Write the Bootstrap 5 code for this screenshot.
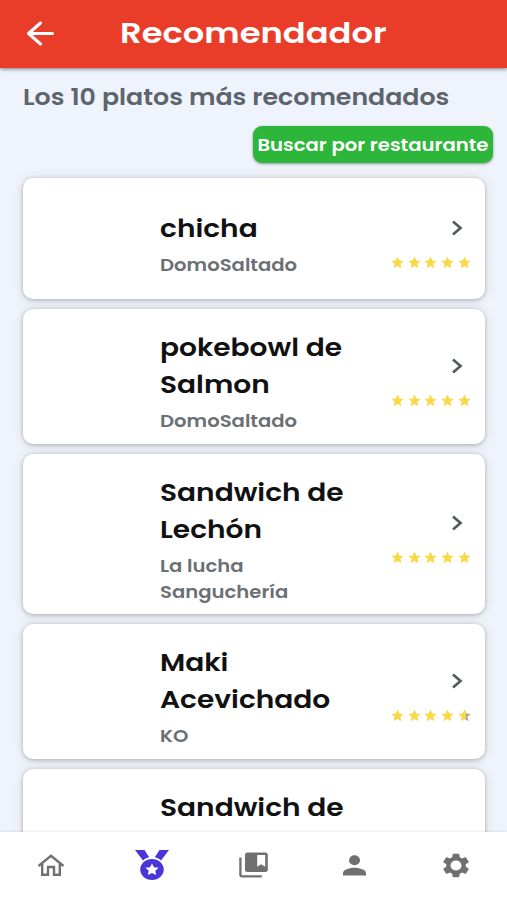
<!DOCTYPE html>
<html lang="es">
<head>
<meta charset="utf-8">
<meta name="viewport" content="width=device-width, initial-scale=1">
<title>Recomendador</title>
<link href="https://cdn.jsdelivr.net/npm/bootstrap@5.3.0/dist/css/bootstrap.min.css" rel="stylesheet">
<style>
body{height:900px;overflow:hidden;background:#eff3fb;font-family:Poppins,Inter,"Open Sans",sans-serif;font-weight:600}
.wide{display:inline-block;transform-origin:0 50%;transform:scaleX(1.1);white-space:nowrap}
.topbar{height:68px;background:#e93d2a;box-shadow:0 1px 4px rgba(0,0,0,.5);z-index:2}
.topbar h1{font-size:28px;font-weight:600;line-height:40px;margin-left:65px}
.topbar .wide{transform:scaleX(1.205)}
.back{margin-left:25px}
.heading{font-size:22px;line-height:30px;color:#5c646d;margin:15px 0 0 23px;font-weight:600}
.heading .wide{transform:scaleX(1.148)}
.search{width:240px;height:37px;margin:13px 14px 15px auto;background:#2db73a;border-radius:9px;font-size:18px;font-weight:600;line-height:35px;box-shadow:0 1px 3px rgba(0,0,0,.4)}
.search:hover{background:#279f33}
.search .wide{transform-origin:50% 50%;transform:scaleX(1.09)}
.dishes{gap:10px;padding:0 22px 0 23px}
.dish{min-height:121px;border-radius:10px;box-shadow:0 1px 4px rgba(0,0,0,.26),0 0 14px rgba(70,60,30,.09);padding:20px 14px 9.7px 137px}
.dish-text{width:210px}
.dish h2{font-size:25.5px;line-height:37px;font-weight:600;color:#111}
.dish p{font-size:18px;line-height:26px;margin-top:5px;color:#6b7074}
.dish p .wide{transform:scaleX(1.09)}
.rating{width:80px;margin-top:1px}
.chev{margin:0 8px 20px 0}
.stars{gap:3.8px}
.tabs{height:68px;background:#fff;z-index:2;box-shadow:0 -1px 2px rgba(0,0,0,.08)}
.tabs a{width:20%;color:#707070;padding-bottom:2px}
.tabs a.active{color:#4936d8}
</style>
<script src="https://cdn.jsdelivr.net/npm/bootstrap@5.3.0/dist/js/bootstrap.bundle.min.js"></script>
</head>
<body class="d-flex flex-column">
<svg width="0" height="0" class="d-none" aria-hidden="true">
<symbol id="star" viewBox="0 0 24 24"><path d="M12 .8l3.400 7.300 8 .9-6 5.400 1.700 8L12 18.400 4.900 22.400l1.700-8-6-5.400 8-.9z"/></symbol>
<symbol id="chevron" viewBox="0 0 12 16"><path d="M2 1.500L9.500 8 2 14.500" fill="none" stroke="#555a5e" stroke-width="2.700"/></symbol>
</svg>
<header class="topbar d-flex align-items-center flex-shrink-0 position-relative text-white">
<a href="#" class="back d-flex text-white" aria-label="Atrás"><svg width="30" height="26" viewBox="0 0 30 26" fill="none" stroke="currentColor" stroke-width="3" stroke-linecap="round" stroke-linejoin="round"><path d="M27.500 12.500H3.500M15.500 2L3.500 12.500l12 10.500"/></svg></a>
<h1 class="mb-0"><span class="wide">Recomendador</span></h1>
</header>
<main class="flex-grow-1 overflow-hidden d-flex flex-column">
<h2 class="heading flex-shrink-0"><span class="wide">Los 10 platos más recomendados</span></h2>
<button type="button" class="search btn d-block text-white text-nowrap p-0 border-0 flex-shrink-0"><span class="wide">Buscar por restaurante</span></button>
<div class="dishes d-flex flex-column">
<article class="dish card border-0 flex-row align-items-center justify-content-between flex-shrink-0"><div class="dish-text"><h2 class="mb-0"><span class="wide">chicha</span></h2><p class="mb-0"><span class="wide">DomoSaltado</span></p></div><div class="rating d-flex flex-column align-items-end"><svg class="chev" width="12" height="16"><use href="#chevron"/></svg><div class="stars d-flex"><svg width="13" height="13" fill="#f9d94a"><use href="#star"/></svg><svg width="13" height="13" fill="#f9d94a"><use href="#star"/></svg><svg width="13" height="13" fill="#f9d94a"><use href="#star"/></svg><svg width="13" height="13" fill="#f9d94a"><use href="#star"/></svg><svg width="13" height="13" fill="#f9d94a"><use href="#star"/></svg></div></div></article>
<article class="dish card border-0 flex-row align-items-center justify-content-between flex-shrink-0"><div class="dish-text"><h2 class="mb-0"><span class="wide">pokebowl de<br>Salmon</span></h2><p class="mb-0"><span class="wide">DomoSaltado</span></p></div><div class="rating d-flex flex-column align-items-end"><svg class="chev" width="12" height="16"><use href="#chevron"/></svg><div class="stars d-flex"><svg width="13" height="13" fill="#f9d94a"><use href="#star"/></svg><svg width="13" height="13" fill="#f9d94a"><use href="#star"/></svg><svg width="13" height="13" fill="#f9d94a"><use href="#star"/></svg><svg width="13" height="13" fill="#f9d94a"><use href="#star"/></svg><svg width="13" height="13" fill="#f9d94a"><use href="#star"/></svg></div></div></article>
<article class="dish card border-0 flex-row align-items-center justify-content-between flex-shrink-0"><div class="dish-text"><h2 class="mb-0"><span class="wide">Sandwich de<br>Lechón</span></h2><p class="mb-0"><span class="wide">La lucha<br>Sanguchería</span></p></div><div class="rating d-flex flex-column align-items-end"><svg class="chev" width="12" height="16"><use href="#chevron"/></svg><div class="stars d-flex"><svg width="13" height="13" fill="#f9d94a"><use href="#star"/></svg><svg width="13" height="13" fill="#f9d94a"><use href="#star"/></svg><svg width="13" height="13" fill="#f9d94a"><use href="#star"/></svg><svg width="13" height="13" fill="#f9d94a"><use href="#star"/></svg><svg width="13" height="13" fill="#f9d94a"><use href="#star"/></svg></div></div></article>
<article class="dish card border-0 flex-row align-items-center justify-content-between flex-shrink-0"><div class="dish-text"><h2 class="mb-0"><span class="wide">Maki<br>Acevichado</span></h2><p class="mb-0"><span class="wide">KO</span></p></div><div class="rating d-flex flex-column align-items-end"><svg class="chev" width="12" height="16"><use href="#chevron"/></svg><div class="stars d-flex"><svg width="13" height="13" fill="#f9d94a"><use href="#star"/></svg><svg width="13" height="13" fill="#f9d94a"><use href="#star"/></svg><svg width="13" height="13" fill="#f9d94a"><use href="#star"/></svg><svg width="13" height="13" fill="#f9d94a"><use href="#star"/></svg><svg width="13" height="13" viewBox="0 0 24 24"><path fill="#aaa39a" d="M12 .8l3.400 7.300 8 .9-6 5.400 1.700 8L12 18.400z"/><path fill="#f9d94a" d="M14.500 6V19.700L12 18.400 4.900 22.400l1.700-8-6-5.400 8-.9L12 .8z"/></svg></div></div></article>
<article class="dish card border-0 flex-row align-items-center flex-shrink-0"><div class="dish-text"><h2 class="mb-0"><span class="wide">Sandwich de<br>&nbsp;</span></h2><p class="mb-0">&nbsp;</p></div></article>
</div>
</main>
<nav class="tabs d-flex flex-shrink-0 position-relative" aria-label="Principal">
<a href="#" class="d-flex align-items-center justify-content-center" aria-label="Inicio"><svg width="28" height="22" viewBox="0 0 28 22" fill="none" stroke="currentColor" stroke-width="2.400"><path d="M1.500 12L14 1.800 26.500 12M5.200 10v10.800H11V13h6v7.800h5.800V10"/></svg></a>
<a href="#" class="active d-flex align-items-center justify-content-center" aria-label="Recomendados"><svg width="36" height="32" viewBox="0 0 36 32" fill="currentColor"><path d="M1 1h9.500l4.700 7.300c-2.400.5-4.500 1.500-6.200 3.300zM35 1h-9.500l-4.700 7.300c2.400.5 4.500 1.500 6.200 3.300z"/><path fill-rule="evenodd" d="M18 10c-6.500 0-11.800 4.700-11.800 10.500S11.500 31 18 31s11.800-4.700 11.800-10.500S24.500 10 18 10zm0 4.500l2 3.700 4.600.6-3.300 2.900.8 4.200L18 23.900l-4.100 2 .8-4.200-3.300-2.900 4.600-.6z"/></svg></a>
<a href="#" class="d-flex align-items-center justify-content-center" aria-label="Colecciones"><svg width="29" height="26" viewBox="0 0 29 26" fill="currentColor"><path fill-rule="evenodd" d="M8.500.5h17.800q2.500 0 2.500 2.500v14.500q0 2.500-2.500 2.500H8.500Q6 20 6 17.500V3Q6 .5 8.500.5zM18.200 3v11.800l4-2.500 4 2.500V3z"/><path d="M1.400 5.500v17q0 1.800 1.800 1.800h19.600" fill="none" stroke="currentColor" stroke-width="2.300"/></svg></a>
<a href="#" class="d-flex align-items-center justify-content-center" aria-label="Perfil"><svg width="23" height="21" viewBox="0 0 23 21" fill="currentColor"><ellipse cx="11.500" cy="5.300" rx="5.500" ry="5"/><path d="M0 20.500v-2.700c0-3.400 7.600-5.100 11.500-5.100S23 14.400 23 17.800v2.700z"/></svg></a>
<a href="#" class="d-flex align-items-center justify-content-center" aria-label="Ajustes"><svg width="30" height="27" viewBox="1 1 22 22" preserveAspectRatio="none" fill="currentColor"><path d="M19.140 12.940c.04-.3.060-.61.060-.94s-.02-.64-.07-.94l2.030-1.580c.18-.14.230-.41.120-.61l-1.920-3.320c-.12-.22-.37-.29-.59-.22l-2.390.96c-.5-.38-1.030-.7-1.620-.94l-.36-2.540c-.04-.24-.24-.41-.48-.41h-3.840c-.24 0-.43.17-.47.41l-.36 2.540c-.59.24-1.130.57-1.620.94l-2.390-.96c-.22-.08-.47 0-.59.22L2.740 8.870c-.12.21-.08.47.12.61l2.030 1.580c-.05.3-.09.63-.09.94s.02.64.07.94l-2.030 1.580c-.18.14-.23.41-.12.61l1.920 3.320c.12.22.37.29.59.22l2.390-.96c.5.38 1.030.7 1.620.94l.36 2.540c.05.24.24.41.48.41h3.840c.24 0 .44-.17.47-.41l.36-2.540c.59-.24 1.130-.56 1.620-.94l2.390.96c.22.08.47 0 .59-.22l1.920-3.320c.12-.22.070-.47-.12-.61zM12 16c-2.210 0-4-1.790-4-4s1.790-4 4-4 4 1.790 4 4-1.790 4-4 4z"/></svg></a>
</nav>
</body>
</html>
